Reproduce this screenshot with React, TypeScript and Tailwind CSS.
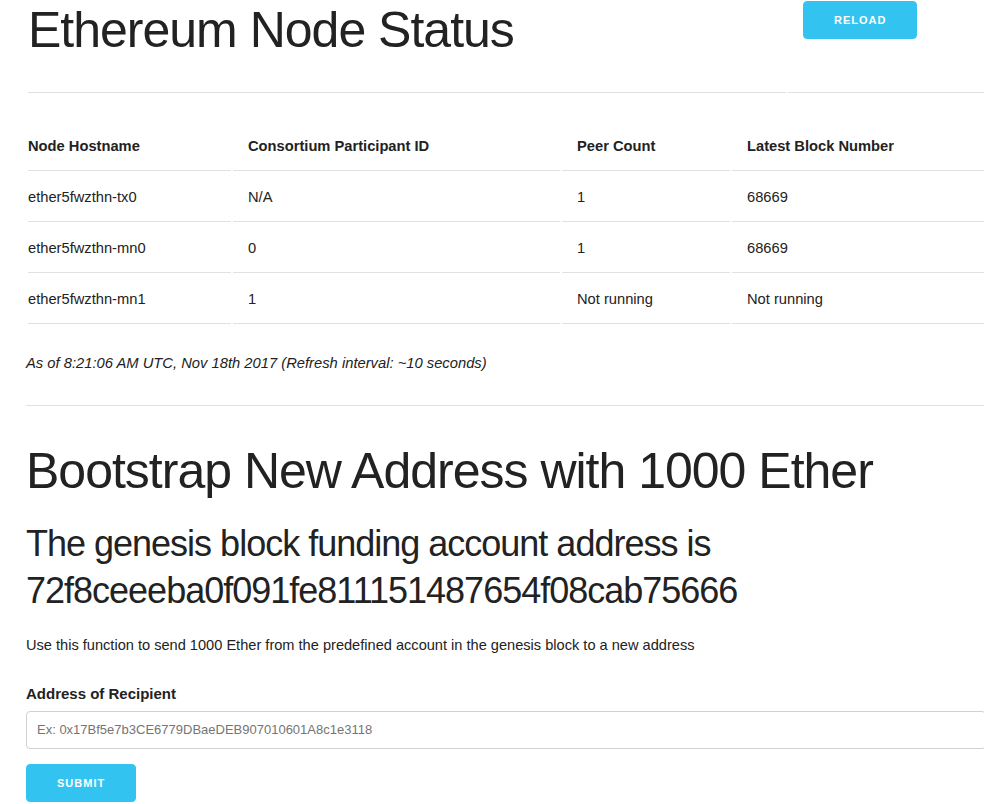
import React from "react";

const rows = [
  ["ether5fwzthn-tx0", "N/A", "1", "68669"],
  ["ether5fwzthn-mn0", "0", "1", "68669"],
  ["ether5fwzthn-mn1", "1", "Not running", "Not running"],
];

const headers = ["Node Hostname", "Consortium Participant ID", "Peer Count", "Latest Block Number"];

export default function App() {
  return (
    <div className="w-[984px] h-[804px] overflow-hidden bg-white text-[#222] font-['Liberation_Sans',Arial,sans-serif] text-[15px] leading-6">
      <div className="w-[960px] ml-[26px]">
        {/* Header */}
        <div className="grid grid-cols-[758px_1fr] gap-x-[2px] px-[2px]">
          <div className="border-b border-[#E1E1E1] pb-[32px]">
            <h1 className="text-[50px] leading-[60px] tracking-[-1px] font-light">Ethereum Node Status</h1>
          </div>
          <div className="border-b border-[#E1E1E1] pt-[1px] pl-[15px]">
            <button className="h-[38px] px-[30px] rounded border border-[#33C3F0] bg-[#33C3F0] text-white text-[11px] font-bold tracking-[1px] uppercase leading-[36px]">
              Reload
            </button>
          </div>
        </div>

        {/* Status table */}
        <div className="mt-[29px] grid grid-cols-[203px_327px_168px_252px] gap-[2px] px-[2px] text-[14.7px]">
          {headers.map((h, i) => (
            <div
              key={h}
              className={`py-3 border-b border-[#E1E1E1] font-bold ${i === 0 ? "pr-[15px]" : "px-[15px]"}`}
            >
              {h}
            </div>
          ))}
          {rows.map((r) =>
            r.map((c, i) => (
              <div
                key={r[0] + i}
                className={`py-3 border-b border-[#E1E1E1] ${i === 0 ? "pr-[15px]" : "px-[15px]"}`}
              >
                {c}
              </div>
            ))
          )}
        </div>

        <p className="mt-[27px] italic text-[14.75px]">As of 8:21:06 AM UTC, Nov 18th 2017 (Refresh interval: ~10 seconds)</p>

        <hr className="mt-[30px] mb-[35px] border-0 border-t border-[#E1E1E1]" />

        <h1 className="text-[50px] leading-[60px] tracking-[-1px] font-light mb-[20px]">
          Bootstrap New Address with 1000 Ether
        </h1>
        <h3 className="text-[36px] leading-[1.3] tracking-[-1px] font-light mb-[18px]">
          The genesis block funding account address is 72f8ceeeba0f091fe811151487654f08cab75666
        </h3>
        <p className="mb-[25px] text-[14.6px]">
          Use this function to send 1000 Ether from the predefined account in the genesis block to a new address
        </p>

        <label className="block font-bold mb-[5px]" htmlFor="recipient">
          Address of Recipient
        </label>
        <input
          id="recipient"
          type="text"
          placeholder="Ex: 0x17Bf5e7b3CE6779DBaeDEB907010601A8c1e3118"
          className="block w-full h-[38px] px-[10px] py-[6px] border border-[#D1D1D1] rounded bg-white text-[13px] placeholder:text-[#757575] outline-none mb-[15px]"
        />
        <button className="h-[38px] px-[30px] rounded border border-[#33C3F0] bg-[#33C3F0] text-white text-[11px] font-bold tracking-[1px] uppercase leading-[36px]">
          Submit
        </button>
      </div>
    </div>
  );
}
